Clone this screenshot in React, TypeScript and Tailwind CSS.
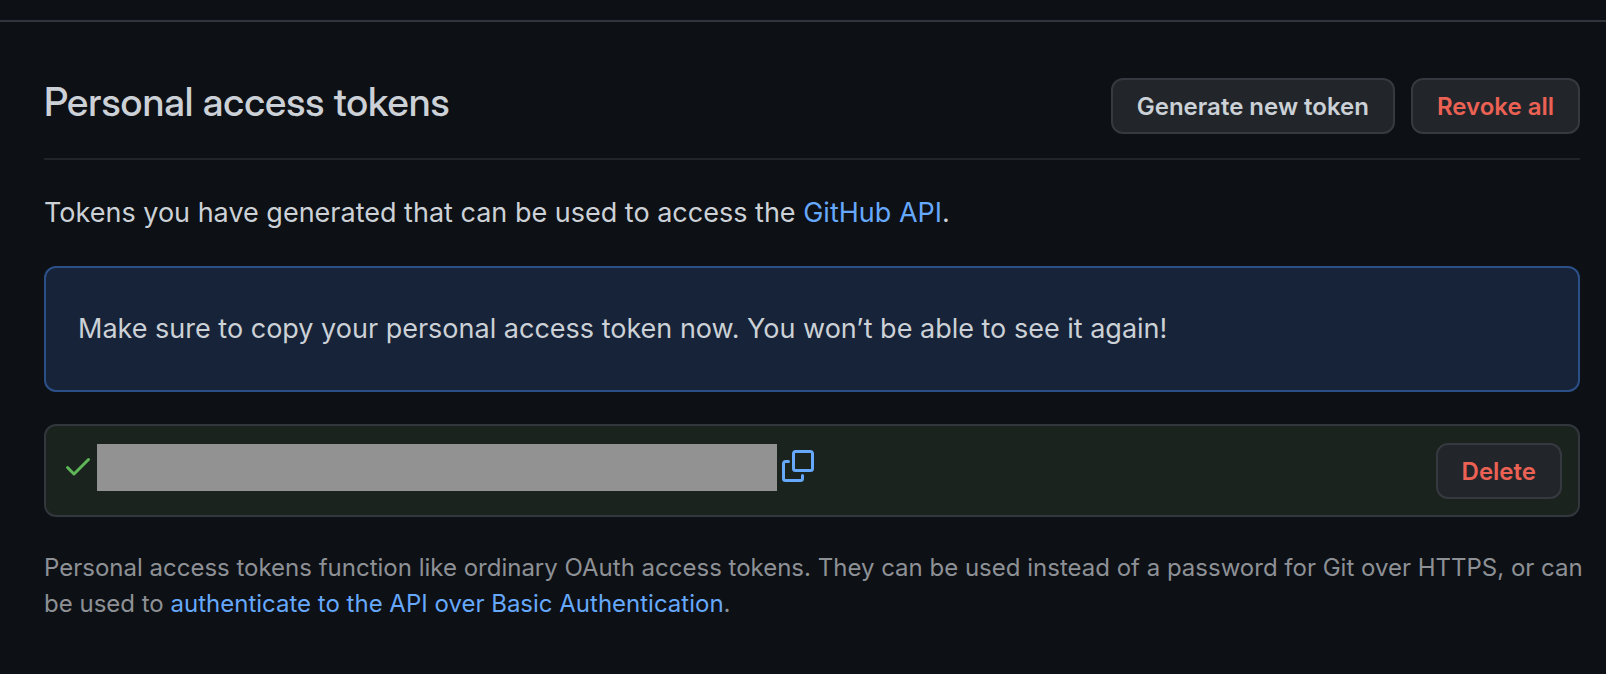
import React from "react";

function CheckIcon() {
  return (
    <svg viewBox="0 0 16 16" className="size-8 shrink-0" fill="#5fb858" aria-hidden="true">
      <path d="M13.78 4.22a.75.75 0 010 1.06l-7.25 7.25a.75.75 0 01-1.06 0L2.22 9.28a.75.75 0 011.06-1.06L6 10.94l6.72-6.72a.75.75 0 011.06 0z" />
    </svg>
  );
}

function CopyIcon() {
  return (
    <svg viewBox="0 0 16 16" className="size-8" fill="#66a8fb" aria-hidden="true">
      <path d="M0 6.75C0 5.784.784 5 1.75 5h1.5a.75.75 0 010 1.5h-1.5a.25.25 0 00-.25.25v7.5c0 .138.112.25.25.25h7.5a.25.25 0 00.25-.25v-1.5a.75.75 0 011.5 0v1.5A1.75 1.75 0 019.25 16h-7.5A1.75 1.75 0 010 14.25v-7.5z" />
      <path d="M5 1.75C5 .784 5.784 0 6.75 0h7.5C15.216 0 16 .784 16 1.75v7.5A1.75 1.75 0 0114.25 11h-7.5A1.75 1.75 0 015 9.25v-7.5zm1.75-.25a.25.25 0 00-.25.25v7.5c0 .138.112.25.25.25h7.5a.25.25 0 00.25-.25v-7.5a.25.25 0 00-.25-.25h-7.5z" />
    </svg>
  );
}

const button =
  "h-14 rounded-xl border-2 border-[#36393f] bg-[#22262b] px-6 pt-px text-2xl font-semibold";

export default function App() {
  return (
    <main className="min-h-screen bg-[#0d1015] pt-5 font-[Inter,sans-serif] text-[#cbd1d6]">
      <hr className="border-t-2 border-[#31343d]" />
      <div className="pt-14 pr-[26px] pl-11">
        <header className="flex items-start justify-between border-b-2 border-[#212429] pb-6">
          <h1 className="font-['Inter_Display',Inter,sans-serif] text-[39px] leading-12 font-medium">Personal access tokens</h1>
          <div className="flex gap-4">
            <button type="button" className={button}>Generate new token</button>
            <button type="button" className={`${button} text-[#eb6154]`}>Revoke all</button>
          </div>
        </header>
        <p className="mt-8 text-[27px] leading-[42px]">
          Tokens you have generated that can be used to access the{" "}
          <a href="#api" className="text-[#66a8fb]">GitHub API</a>.
        </p>
        <div role="status" className="mt-8 rounded-xl border-2 border-[#2b5088] bg-[#172338] px-8 py-10 text-[27px] leading-[42px]">
          Make sure to copy your personal access token now. You won’t be able to see it again!
        </div>
        <div className="mt-8 flex items-start justify-between rounded-xl border-2 border-[#31373c] bg-[#1b231e] px-4 pt-[17px] pb-4">
          <div className="flex items-start pt-px">
            <span className="pt-1.5"><CheckIcon /></span>
            <span className="ml-[3px] h-[47px] w-[680px] bg-[#929292]" />
            <button type="button" aria-label="Copy token" className="ml-[5px] pt-1.5"><CopyIcon /></button>
          </div>
          <button type="button" className={`${button} text-[#eb6154]`}>Delete</button>
        </div>
        <p className="mt-[33px] -mr-2 text-2xl leading-9 text-[#8d9196]">
          Personal access tokens function like ordinary OAuth access tokens. They can be used instead of a password for Git over HTTPS, or can be used to{" "}
          <a href="#auth" className="text-[#66a8fb]">authenticate to the API over Basic Authentication</a>.
        </p>
      </div>
    </main>
  );
}
